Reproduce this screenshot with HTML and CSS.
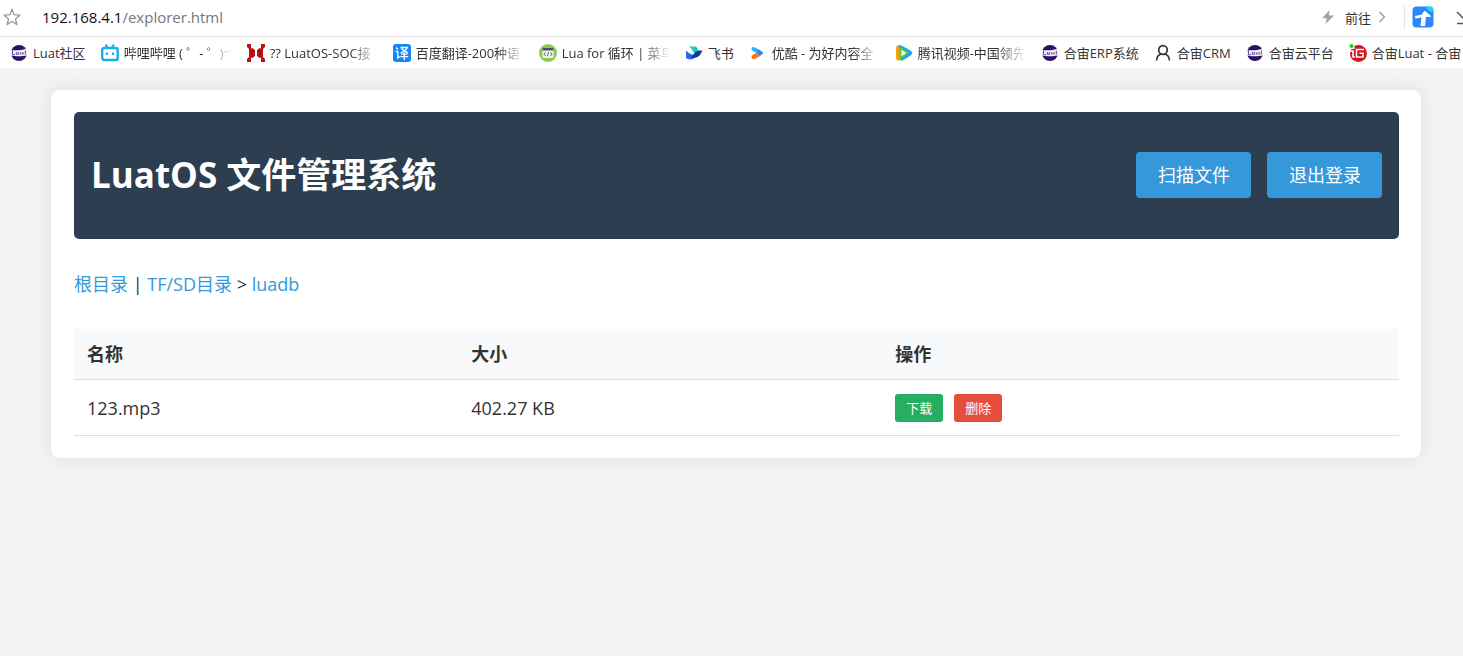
FILE: index.html
```html
<!DOCTYPE html>
<html lang="zh-CN">
<head>
<meta charset="utf-8">
<title>LuatOS 文件管理系统</title>
<link rel="stylesheet" href="styles.css">
</head>
<body>
<svg class="defs" aria-hidden="true">
  <symbol id="luat" viewBox="0 0 18 18">
    <circle cx="9" cy="9" r="8" fill="#241468"/>
    <path d="M0 6C5 6.500 12 6.500 17 4.500V11.500C12 12.500 5 12.500 1 11.500z" fill="#f4f1fa"/>
    <path d="M2.500 6.500V10.700H5M6.300 8v2.300h2V8" fill="none" stroke="#5a4a9c"/>
    <path d="M9.800 8.500h1.700v2H9.800z" fill="#6f5fae"/>
    <path d="M12.200 8.200h1.800v2.300h-1.800z" fill="#e2636f"/>
    <path d="M15.300 6.500v4" fill="none" stroke="#5a4a9c"/>
  </symbol>
</svg>

<header class="browser">
  <div class="address-row">
    <button class="icon-button" aria-label="收藏">
      <svg width="18" height="18" viewBox="0 0 18 18"><path d="M9 1.500l2.200 5.200 5.600.5-4.300 3.700 1.300 5.500L9 13.500l-4.800 2.900 1.300-5.500L1.200 7.200l5.600-.5z" fill="none" stroke="#999" stroke-width="1.300"/></svg>
    </button>
    <div class="address"><span class="host">192.168.4.1</span>/explorer.html</div>
    <div class="address-tools">
      <svg width="14" height="16" viewBox="0 0 14 16"><path d="M8.500 1L1 9.300h4.700L4.500 15 13 6.500H8z" fill="#a3a3a3"/></svg>
      <button class="go">前往
        <svg width="8" height="12" viewBox="0 0 8 12"><path d="M1.500 1l5 5-5 5" fill="none" stroke="#999" stroke-width="1.300"/></svg>
      </button>
    </div>
    <div class="extensions">
      <svg width="22" height="22" viewBox="0 0 22 22"><rect width="21" height="21" x=".5" y=".5" rx="4" fill="#2e86fb"/><path d="M14 .5h3.500a4 4 0 0 1 4 4V6C18 6 14.500 4 14 .5z" fill="#0de3f4"/><path d="M12.500 4.500L19 10l-.8 1.300-4.200-.6L13 20H8.500l1-8.500L3.500 12.500 3 10l6.800-1.500z" fill="#fff"/></svg>
      <svg class="download" width="20" height="16" viewBox="0 0 20 16"><path d="M1 3l9 9 9-9M1 14.500h18M10 0v12" fill="none" stroke="#555" stroke-width="1.500"/></svg>
    </div>
  </div>
  <nav class="bookmarks" aria-label="书签">
    <a href="#"><svg viewBox="0 0 18 18"><use href="#luat"/></svg><span>Luat社区</span></a>
    <a href="#"><svg viewBox="0 0 18 18"><path d="M4.500 .5l2 3M13 .5l-2 3" stroke="#16afe9" stroke-width="2"/><rect x="1.200" y="4" width="15.500" height="12" rx="2" fill="#fff" stroke="#16afe9" stroke-width="2.400"/><path d="M5.800 8.500v2.500M12 8.500v2.500" stroke="#16afe9" stroke-width="2"/></svg><span class="long">哔哩哔哩 ( ゜- ゜)つ</span></a>
    <a href="#"><svg viewBox="0 0 18 18"><path d="M0 0h4v3l4 3v6l-4 3v3H0v-3l2-2V5L0 3zM18 0h-4v3l-4 3v6l4 3v3h4v-3l-2-2V5l2-2z" fill="#c01015"/><path d="M4.500 1v16M13.500 1v16" stroke="#fff" stroke-width="1"/><path d="M4 4l4 3v4l-4 3zM14 4l-4 3v4l4 3z" fill="#b20e14"/></svg><span class="long">?? LuatOS-SOC接</span></a>
    <a href="#"><svg viewBox="0 0 18 18"><rect width="18" height="18" rx="3" fill="#1684fc"/><path d="M3 3.500l2 2M2.500 7.500h2.300V14l2-1.500M7.500 3.500h6.800c-1.300 2.500-3.500 4.300-6.800 5.300M8.500 4.500c1.500 2 3.500 3.400 6.500 4.300M8 10.200h6.500M7.200 12.700h8M11.300 8.800V16" fill="none" stroke="#fff" stroke-width="1.300"/></svg><span class="long">百度翻译-200种语</span></a>
    <a href="#"><svg viewBox="0 0 18 18"><circle cx="9" cy="9" r="9" fill="#90c751"/><rect x="3.500" y="4" width="11" height="10" rx="1" fill="#f1f5e9"/><path d="M3.500 4h11v2.500h-11z" fill="#435660"/><path d="M6.500 8.500L5 10.200 6.500 12M11.500 8.500l1.500 1.700-1.500 1.800M9.700 8.200l-1.400 4" fill="none" stroke="#56676b"/></svg><span class="long">Lua for 循环 | 菜鸟</span></a>
    <a href="#"><svg viewBox="0 0 18 18"><path d="M4 2.500h7c1.500 1.500 2.200 3 2.500 4.500L9.500 10C8 7 6.500 4.500 4 2.500z" fill="#14d2b3"/><path d="M1 6.500c3.500 3.500 7 5 11 4.500-2.500 5-8 5.500-11 3z" fill="#2868f4"/><path d="M8.500 10.500C11.500 6.500 14 6 17.500 7c-1.700 2-2 4.500-5 6-2 1-5 1-7-.2 1.500-.5 2.200-1 3-2.300z" fill="#15389b"/></svg><span>飞书</span></a>
    <a href="#"><svg viewBox="0 0 18 18"><path d="M4.500 5L10 8" stroke="#19b8ff" stroke-width="4" stroke-linecap="round"/><path d="M4.800 13L10 10" stroke="#ff7414" stroke-width="4.500" stroke-linecap="round"/><path d="M9 5.200L13.500 8q1.300 1 0 2L11 11.500 8 9z" fill="#2589f5"/></svg><span class="long">优酷 - 为好内容全</span></a>
    <a href="#"><svg viewBox="0 0 18 18"><path d="M5 1.500Q1 0 1 5v8q0 5 5 3z" fill="#ff9a13"/><path d="M3.500 1.500Q6 .5 16 7q2.500 2 0 4Q10 15.500 6 17z" fill="#18a4f2"/><path d="M4.500 3.500q5 1 9 5.500-4 4-9 6.500-1.500-6 0-12z" fill="#58d12a"/><path d="M6.500 6Q9 7 11 9q-2 2-4.500 3z" fill="#fff"/></svg><span class="long">腾讯视频-中国领先</span></a>
    <a href="#"><svg viewBox="0 0 18 18"><use href="#luat"/></svg><span>合宙ERP系统</span></a>
    <a href="#"><svg viewBox="0 0 18 18"><path d="M2.500 16.500c.2-4 2.400-6.500 6.500-6.500s6.300 2.500 6.500 6.500" fill="none" stroke="#333" stroke-width="1.700"/><circle cx="9" cy="6" r="4.300" fill="#fff" stroke="#333" stroke-width="1.700"/></svg><span>合宙CRM</span></a>
    <a href="#"><svg viewBox="0 0 18 18"><use href="#luat"/></svg><span>合宙云平台</span></a>
    <a href="#"><svg viewBox="0 0 18 18"><circle cx="9.500" cy="9.500" r="8.500" fill="#d6121c"/><path d="M0 0h5.500v5H0z" fill="#fff"/><circle cx="2.500" cy="2" r="2" fill="#10d41b"/><path d="M1 7h3v6h2M15 5.500H7.500v7.500H14V9.300h-3.500" fill="none" stroke="#fff" stroke-width="1.600"/></svg><span>合宙Luat - 合宙</span></a>
  </nav>
</header>

<main class="page">
  <section class="card">
    <div class="banner">
      <h1>LuatOS 文件管理系统</h1>
      <div class="actions">
        <button class="primary">扫描文件</button>
        <button class="primary">退出登录</button>
      </div>
    </div>
    <nav class="crumbs" aria-label="路径"><a href="#">根目录</a> | <a href="#">TF/SD目录</a> &gt; <a href="#">luadb</a></nav>
    <table>
      <thead><tr><th class="name">名称</th><th class="size">大小</th><th>操作</th></tr></thead>
      <tbody>
        <tr>
          <td>123.mp3</td>
          <td>402.27 KB</td>
          <td><div class="row-actions"><button class="small download-file">下载</button><button class="small delete-file">删除</button></div></td>
        </tr>
      </tbody>
    </table>
  </section>
</main>
</body>
</html>
```
FILE: styles.css
```css
* { box-sizing: border-box; }

body {
  margin: 0;
  min-height: 100vh;
  overflow-x: hidden;
  background: #f4f4f4;
  color: #333;
  font-family: "Open Sans", "Noto Sans CJK SC", sans-serif;
  font-size: 18px;
}

button {
  border: 0;
  padding: 0;
  background: none;
  color: inherit;
  font: inherit;
  cursor: pointer;
}

a { text-decoration: none; }
svg { flex: none; }
.defs { position: absolute; width: 0; height: 0; }

.browser { background: #fff; overflow: hidden; }

.address-row {
  display: flex;
  align-items: center;
  height: 37px;
  padding: 0 0 2px 3px;
  border-bottom: 1px solid #e4e4e4;
}

.icon-button { display: flex; }

.address {
  flex: 1;
  margin-left: 21px;
  color: #777;
  font-size: 15px;
}

.host { color: #111; }

.address-tools {
  display: flex;
  align-items: center;
  gap: 10px;
  padding-right: 18px;
  font-size: 13px;
}

.go { display: flex; align-items: center; gap: 7px; }

.extensions {
  display: flex;
  align-items: center;
  gap: 22px;
  width: 59px;
  height: 24px;
  padding-left: 7px;
  border-left: 1px solid #e4e4e4;
}

.bookmarks {
  display: flex;
  gap: 15px;
  height: 31px;
  padding-left: 10px;
}

.bookmarks a {
  display: flex;
  flex: none;
  align-items: center;
  gap: 5px;
  color: #333;
  font-size: 13px;
  white-space: nowrap;
}

.bookmarks svg { width: 18px; height: 18px; }

.bookmarks .long {
  width: 108px;
  overflow: hidden;
  mask-image: linear-gradient(to right, #000 80px, transparent 108px);
}

.page { padding: 22px 42px 22px 51px; }

.card {
  padding: 22px 22px 22px 23px;
  border-radius: 9px;
  background: #fff;
  box-shadow: 0 0 22px rgba(0, 0, 0, 0.1);
}

.banner {
  display: flex;
  align-items: center;
  justify-content: space-between;
  min-height: 127px;
  padding: 16px 17px 17px;
  border-radius: 5px;
  background: #2c3e50;
  color: #fff;
}

h1 { margin: 0; font-size: 35px; line-height: 48px; }

.actions { display: flex; gap: 16px; }

.primary {
  padding: 10px 21px 10px 22px;
  border-radius: 4px;
  background: #3498db;
  font-size: 18px;
  line-height: 26px;
}

.crumbs {
  margin: 32px 0;
  font-size: 18px;
  line-height: 26px;
}

.crumbs a { color: #3498db; }

table { width: 100%; border-collapse: collapse; table-layout: fixed; }

th, td {
  padding: 12px 13px;
  border-bottom: 1px solid #ddd;
  text-align: left;
  line-height: 26px;
}

th { background: #f8f9fa; }
td { padding: 14px 13px 13px; }
.name { width: 29%; }
.size { width: 32%; }

.row-actions { display: flex; gap: 11px; }

.small {
  padding: 4px 11px;
  border-radius: 3px;
  color: #fff;
  font-size: 13px;
  line-height: 20px;
}

.download-file { background: #27ae60; }
.delete-file { background: #e74c3c; }
```
